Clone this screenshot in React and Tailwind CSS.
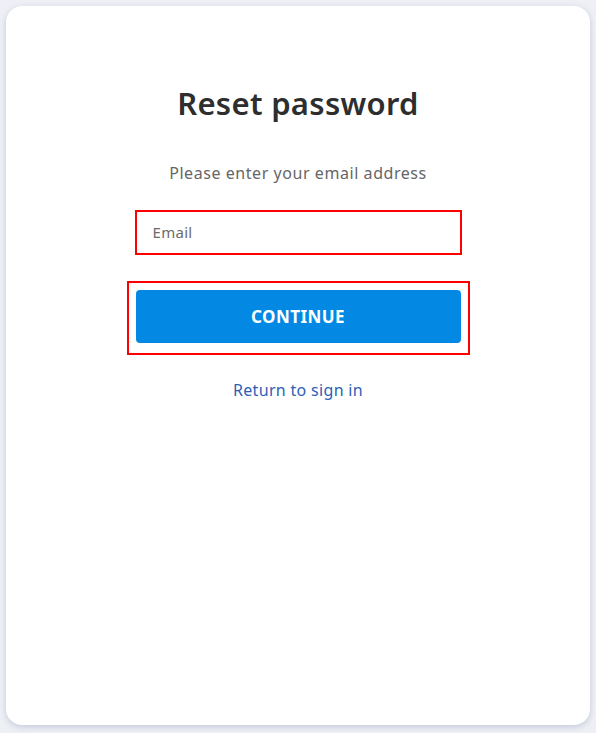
import React from 'react';

const App = () => {
    return (
        <div className="h-[733px] w-full bg-[#eef0f5] p-[6px] pb-[8px] font-['Noto_Sans',sans-serif] overflow-hidden">
            <div className="h-full bg-white rounded-[16px] shadow-[0_2px_6px_rgba(120,130,170,0.35)] flex flex-col items-center pt-[79px]">
                <h1 className="text-[31px] leading-[36px] font-semibold text-[#2e2e2e] tracking-[0.01em]">Reset password</h1>
                <p className="mt-[42px] text-[16px] leading-[20px] text-[#666] tracking-[0.035em]">Please enter your email address</p>

                {/* EMAIL */}
                <div className="mt-[27px] w-[327px] h-[45px] border-2 border-[#ff0000] flex items-center px-[16px]">
                    <span className="text-[15px] text-[#6b6b6b] tracking-[0.02em]">Email</span>
                </div>

                {/* BUTTON */}
                <div className="mt-[26px] w-[343px] h-[74px] border-2 border-[#ff0000] flex justify-center pt-[7px]">
                    <button className="w-[325px] h-[53px] bg-[#0389e4] rounded-[4px] text-white text-[17px] font-bold tracking-wide">CONTINUE</button>
                </div>

                <a className="mt-[23px] text-[16px] leading-[24px] text-[#2c5fb5] tracking-[0.02em]">Return to sign in</a>
            </div>
        </div>
    );
};

export default App;
